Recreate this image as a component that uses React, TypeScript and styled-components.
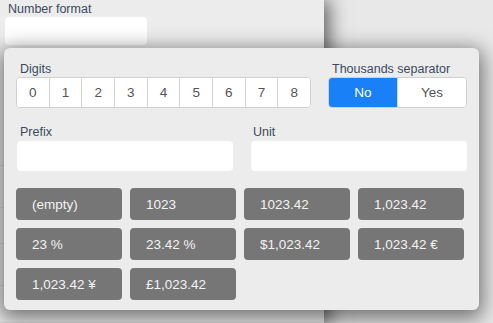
import { FC } from 'react';
import styled, { createGlobalStyle } from 'styled-components';

const GlobalStyle = createGlobalStyle`
	html, body, #root {
		height: 100%;
	}
	body {
		margin: 0;
		font-family: 'Liberation Sans', Arial, Helvetica, sans-serif;
		background: #e9e9e9;
	}
	* {
		box-sizing: border-box;
	}
`;

const Page = styled.div`
	position: relative;
	display: flex;
	height: 100vh;
	overflow: hidden;
`;

const Sidebar = styled.aside`
	position: relative;
	z-index: 1;
	width: 324px;
	display: flex;
	flex-direction: column;
	padding: 2px 0 0 5px;
	background: #ececec;
	box-shadow: 5px 0 18px rgba(0, 0, 0, 0.6);
`;

const Main = styled.main`
	flex: 1;
	background: #e8e8e8;
`;

const SidebarRow = styled.div<{ $height: number }>`
	height: ${({ $height }) => $height}px;
	margin-left: -5px;
	border-bottom: 1px solid #dcdcdc;
`;

const Label = styled.label<{ $indent?: number }>`
	display: block;
	padding-left: ${({ $indent }) => $indent ?? 4}px;
	font-size: 12.5px;
	line-height: 15px;
	color: #3b4a5e;
`;

const SidebarInput = styled.input`
	width: 142px;
	height: 30px;
	margin-bottom: 1px;
	border: none;
	border-radius: 4px;
	background: #fff;
	outline: none;
`;

const Popover = styled.div`
	position: absolute;
	z-index: 2;
	left: 4px;
	top: 48px;
	width: 475px;
	padding: 14px 12px 10px;
	background: #ececec;
	border-radius: 6px;
	box-shadow: 0 5px 20px 4px rgba(0, 0, 0, 0.5);
`;

const TopRow = styled.div`
	display: grid;
	grid-template-columns: 295px 139px;
	column-gap: 17px;
`;

const Field = styled.div`
	display: flex;
	flex-direction: column;
`;

const Segmented = styled.div`
	display: flex;
	height: 31px;
	background: #fff;
	border: 1px solid #d0d0d0;
	border-radius: 4px;
	overflow: hidden;
`;

const Segment = styled.button<{ $active?: boolean }>`
	flex: 1;
	padding: 0;
	border: none;
	border-left: 1px solid #d4d4d4;
	background: ${({ $active }) => ($active ? '#1a80f8' : '#fff')};
	color: ${({ $active }) => ($active ? '#fff' : '#555')};
	font-family: inherit;
	font-size: 13.5px;
	cursor: pointer;

	&:first-child {
		border-left: none;
	}
`;

const InputRow = styled.div`
	display: grid;
	grid-template-columns: 216px 216px;
	column-gap: 18px;
	margin-top: 17px;
	padding-left: 1px;
`;

const TextInput = styled.input`
	height: 30px;
	margin-top: 1px;
	border: none;
	border-radius: 4px;
	background: #fff;
	outline: none;
`;

const PresetGrid = styled.div`
	display: grid;
	grid-template-columns: repeat(4, 106px);
	gap: 8px;
	margin-top: 17px;
`;

const Preset = styled.button`
	height: 32px;
	padding: 0 0 0 16px;
	border: none;
	border-radius: 4px;
	background: #767676;
	color: #f3f3f3;
	font-family: inherit;
	font-size: 13.5px;
	text-align: left;
	cursor: pointer;
`;

const digits = ['0', '1', '2', '3', '4', '5', '6', '7', '8'];

const presets = [
	'(empty)',
	'1023',
	'1023.42',
	'1,023.42',
	'23 %',
	'23.42 %',
	'$1,023.42',
	'1,023.42 €',
	'1,023.42 ¥',
	'£1,023.42',
];

const sidebarRows = [129, 45, 38, 45, 40];

const App: FC = () => (
	<>
		<GlobalStyle />
		<Page>
			<Sidebar>
				<Label $indent={3}>Number format</Label>
				<SidebarInput />
				{sidebarRows.map((h, i) => (
					<SidebarRow key={i} $height={h} />
				))}
			</Sidebar>
			<Main />
			<Popover>
				<TopRow>
					<Field>
						<Label>Digits</Label>
						<Segmented>
							{digits.map((d) => (
								<Segment key={d}>{d}</Segment>
							))}
						</Segmented>
					</Field>
					<Field>
						<Label>Thousands separator</Label>
						<Segmented>
							<Segment $active>No</Segment>
							<Segment>Yes</Segment>
						</Segmented>
					</Field>
				</TopRow>
				<InputRow>
					<Field>
						<Label $indent={3}>Prefix</Label>
						<TextInput />
					</Field>
					<Field>
						<Label $indent={2}>Unit</Label>
						<TextInput />
					</Field>
				</InputRow>
				<PresetGrid>
					{presets.map((p) => (
						<Preset key={p}>{p}</Preset>
					))}
				</PresetGrid>
			</Popover>
		</Page>
	</>
);

export default App;
